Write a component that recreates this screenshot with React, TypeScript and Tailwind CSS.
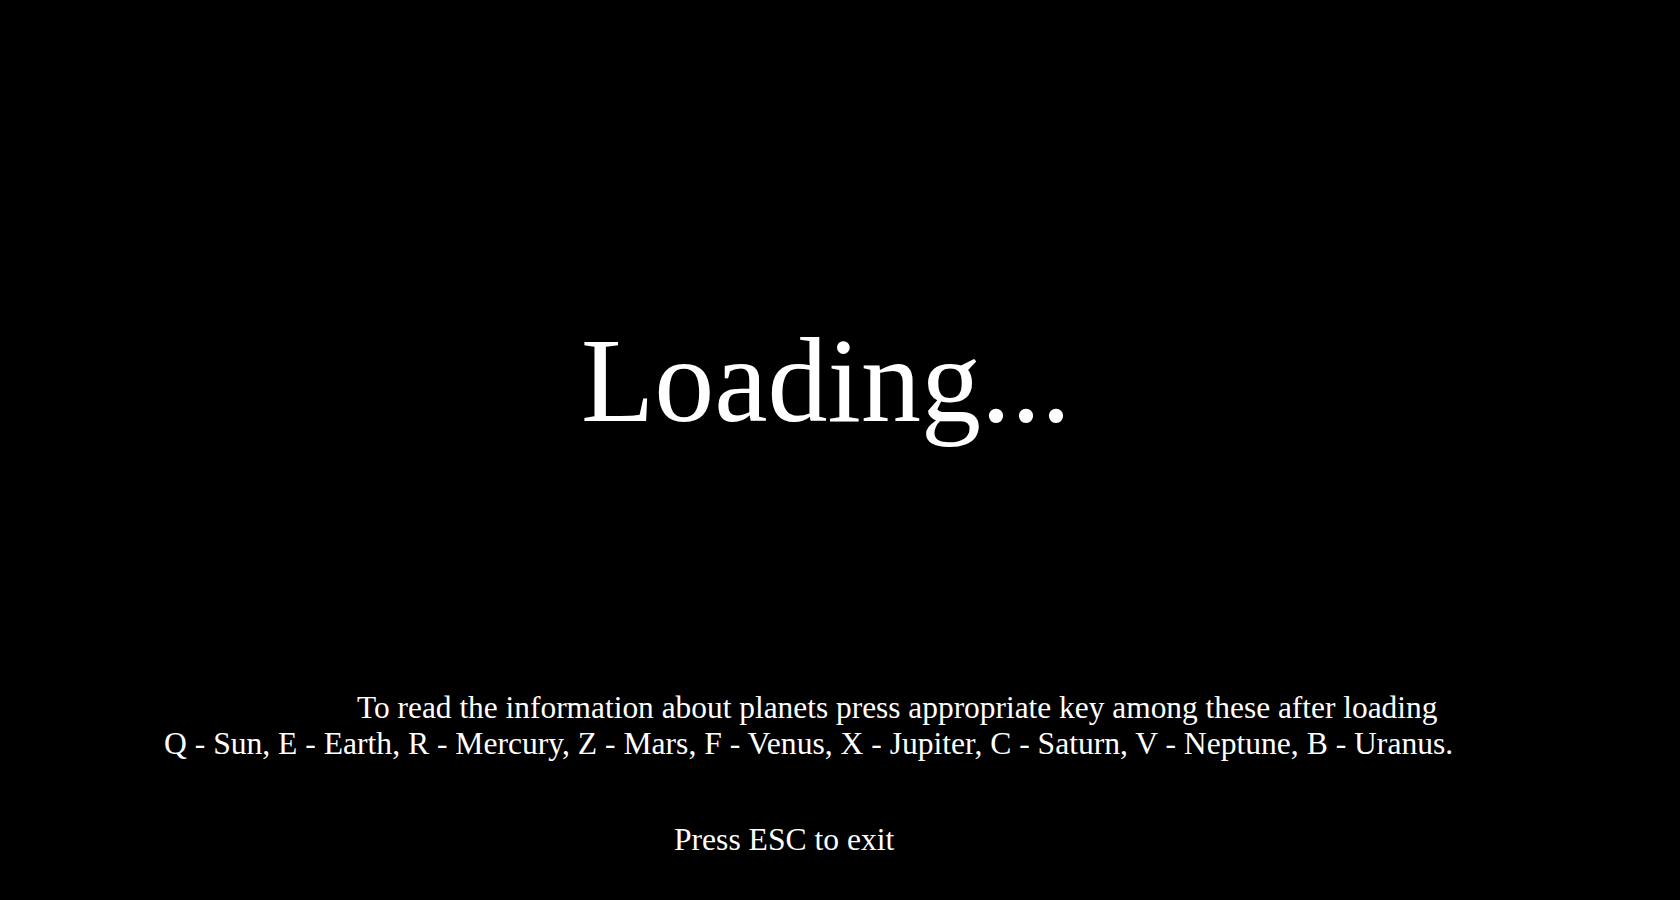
export default function App() {
  return (
    <div className="h-[900px] w-[1680px] overflow-hidden bg-black text-white font-['Liberation_Serif','Times_New_Roman',serif]">
      <div className="flex flex-col pt-[321px]">
        <h1 className="ml-[581px] text-[120px] leading-none font-normal whitespace-nowrap">Loading...</h1>

        <div className="mt-[249px] flex flex-col leading-[36px] whitespace-nowrap">
          <p className="ml-[357px] text-[31.4px]">To read the information about planets press appropriate key among these after loading</p>
          <p className="ml-[164px] text-[31.6px]">
            Q - Sun, E - Earth, R - Mercury, Z - Mars, F - Venus, X - Jupiter, C - Saturn, V - Neptune, B - Uranus.
          </p>
        </div>

        <p className="ml-[674px] mt-[60px] text-[31.6px] leading-[36px] whitespace-nowrap">Press ESC to exit</p>
      </div>
    </div>
  )
}
